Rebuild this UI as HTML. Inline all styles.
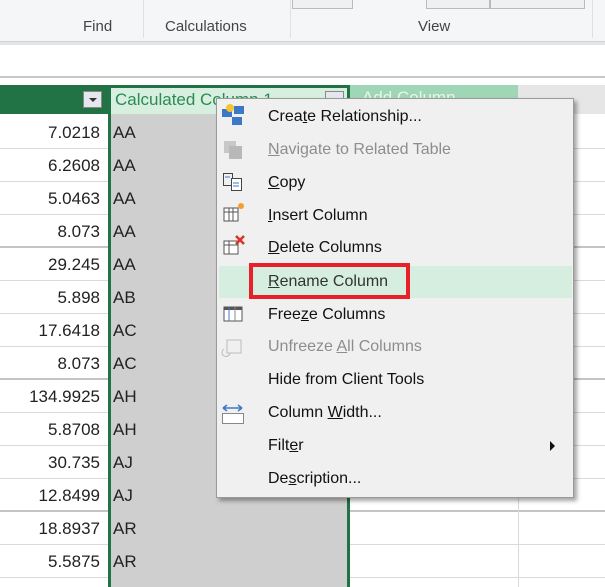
<!DOCTYPE html>
<html><head><style>
*{margin:0;padding:0;box-sizing:border-box}
body{width:605px;height:587px;overflow:hidden;background:#fff;font-family:"Liberation Sans",Arial,sans-serif;position:relative}
.a{position:absolute}
.rib{left:0;top:0;width:605px;height:42px;background:#f5f6f7;border-bottom:1px solid #d4d4d4}
.rl{font-size:15px;color:#444;top:18px}
.sep{width:1px;background:#e0e0e0;top:0;height:38px}
.row{left:0;width:605px;height:33px;border-bottom:1px solid #dadada}
.num{left:0;width:100px;text-align:right;font-size:17px;color:#222;line-height:33px}
.aa{left:113px;font-size:17px;color:#222;line-height:33px}
.menu{left:216px;top:98px;width:358px;height:400px;background:#f0f0f0;border:1px solid #9a9a9a;box-shadow:3px 3px 4px rgba(0,0,0,.35)}
.it{left:268px;font-size:16px;color:#111;line-height:20px}
.dis{color:#8d8d8d}
u{text-decoration:underline}
</style></head><body>
<div class="a rib"></div>
<div class="a" style="left:0;top:42px;width:605px;height:3px;background:#e4e4e4"></div>
<div class="a sep" style="left:143px"></div>
<div class="a sep" style="left:290px"></div>
<div class="a sep" style="left:592px"></div>
<div class="a rl" style="left:83px">Find</div>
<div class="a rl" style="left:165px">Calculations</div>
<div class="a rl" style="left:418px">View</div>
<div class="a" style="left:292px;top:0;width:61px;height:9px;border:1px solid #bbb;border-top:none;background:#f0f0f0"></div>
<div class="a" style="left:426px;top:0;width:64px;height:9px;border:1px solid #bbb;border-top:none;background:#f0f0f0"></div>
<div class="a" style="left:490px;top:0;width:95px;height:9px;border:1px solid #bbb;border-top:none;background:#f0f0f0"></div>
<div class="a" style="left:0;top:76px;width:605px;height:2px;background:#c8c8c8"></div>

<!-- header -->
<div class="a" style="left:0;top:85px;width:108px;height:29px;background:#217346"></div>
<div class="a" style="left:83px;top:91px;width:19px;height:17px;background:#e6e6ee;border:1px solid #888"><div class="a" style="left:5px;top:6px;border-left:4px solid transparent;border-right:4px solid transparent;border-top:4px solid #333"></div></div>
<div class="a" style="left:518px;top:85px;width:87px;height:29px;background:#e6e6e6"></div>
<div class="a" style="left:350px;top:85px;width:168px;height:29px;background:#9fd6b6"></div>
<div class="a" style="left:362px;top:88px;font-size:17px;color:#e8f5ec">Add Column</div>
<div class="a" style="left:108px;top:85px;width:242px;height:502px;background:#cfcfcf;border-left:3px solid #217346;border-right:3px solid #217346;border-top:3px solid #217346"></div>
<div class="a" style="left:111px;top:88px;width:236px;height:26px;background:#d6efdf"></div>
<div class="a" style="left:115px;top:90px;font-size:17px;color:#2e8a54">Calculated Column 1</div>
<div class="a" style="left:325px;top:91px;width:19px;height:17px;background:#e6e6ee;border:1px solid #888"></div>

<!-- rows -->
<div class="a row" style="top:116px"></div><div class="a row" style="top:149px"></div><div class="a row" style="top:182px"></div><div class="a row" style="top:215px;border-bottom:2px solid #c4c4c4"></div><div class="a row" style="top:248px"></div><div class="a row" style="top:281px"></div><div class="a row" style="top:314px"></div><div class="a row" style="top:347px;border-bottom:2px solid #c4c4c4"></div><div class="a row" style="top:380px"></div><div class="a row" style="top:413px"></div><div class="a row" style="top:446px"></div><div class="a row" style="top:479px;border-bottom:2px solid #c4c4c4"></div><div class="a row" style="top:512px"></div><div class="a row" style="top:545px"></div>
<div class="a" style="left:518px;top:114px;width:1px;height:473px;background:#dadada"></div>
<div class="a" style="left:108px;top:114px;width:242px;height:473px;background:#cfcfcf;border-left:3px solid #217346;border-right:3px solid #217346"></div>
<div class="a num" style="top:116px">7.0218</div><div class="a aa" style="top:116px">AA</div>
<div class="a num" style="top:149px">6.2608</div><div class="a aa" style="top:149px">AA</div>
<div class="a num" style="top:182px">5.0463</div><div class="a aa" style="top:182px">AA</div>
<div class="a num" style="top:215px">8.073</div><div class="a aa" style="top:215px">AA</div>
<div class="a num" style="top:248px">29.245</div><div class="a aa" style="top:248px">AA</div>
<div class="a num" style="top:281px">5.898</div><div class="a aa" style="top:281px">AB</div>
<div class="a num" style="top:314px">17.6418</div><div class="a aa" style="top:314px">AC</div>
<div class="a num" style="top:347px">8.073</div><div class="a aa" style="top:347px">AC</div>
<div class="a num" style="top:380px">134.9925</div><div class="a aa" style="top:380px">AH</div>
<div class="a num" style="top:413px">5.8708</div><div class="a aa" style="top:413px">AH</div>
<div class="a num" style="top:446px">30.735</div><div class="a aa" style="top:446px">AJ</div>
<div class="a num" style="top:479px">12.8499</div><div class="a aa" style="top:479px">AJ</div>
<div class="a num" style="top:512px">18.8937</div><div class="a aa" style="top:512px">AR</div>
<div class="a num" style="top:545px">5.5875</div><div class="a aa" style="top:545px">AR</div>

<!-- menu -->
<div class="a menu"></div>
<div class="a" style="left:219px;top:266px;width:353px;height:32px;background:#d5eedf"></div>
<div class="a" style="left:249px;top:263px;width:161px;height:36px;border:4px solid #e8202a"></div>

<svg class="a" style="left:221px;top:103px" width="28" height="380">
<g>
<rect x="1" y="6" width="10" height="8" fill="#3d78c8"/><rect x="13" y="3" width="10" height="8" fill="#3d78c8"/><rect x="11" y="14" width="10" height="8" fill="#3d78c8"/><circle cx="9" cy="5" r="4" fill="#f4c430"/>
</g>
<g fill="#c8c8c8"><rect x="3" y="38" width="12" height="12"/><rect x="8" y="43" width="13" height="13" fill="#b8b8b8"/></g>
<g fill="none" stroke="#444"><rect x="2.5" y="70.5" width="9" height="12"/><rect x="10.5" y="75.5" width="10" height="12" fill="#fff"/></g><g stroke="#3d78c8"><line x1="4" y1="74" x2="9" y2="74"/><line x1="12" y1="80" x2="18" y2="80"/><line x1="12" y1="83" x2="18" y2="83"/></g>
<g><rect x="3" y="105" width="14" height="13" fill="#fff" stroke="#555"/><line x1="3" y1="109" x2="17" y2="109" stroke="#555"/><line x1="8" y1="105" x2="8" y2="118" stroke="#555"/><line x1="12" y1="105" x2="12" y2="118" stroke="#555"/><circle cx="20" cy="103" r="3" fill="#f4a030"/></g>
<g><rect x="3" y="138" width="14" height="13" fill="#fff" stroke="#555"/><line x1="3" y1="142" x2="17" y2="142" stroke="#555"/><line x1="8" y1="138" x2="8" y2="151" stroke="#555"/><path d="M15 133 L23 141 M23 133 L15 141" stroke="#e03020" stroke-width="2.5"/></g>
<g><rect x="3" y="204" width="18" height="14" fill="#fff" stroke="#555"/><rect x="3" y="204" width="18" height="3" fill="#555"/><line x1="8" y1="204" x2="8" y2="218" stroke="#3d78c8"/><line x1="14" y1="204" x2="14" y2="218" stroke="#888"/></g>
<g stroke="#bbb" fill="none"><rect x="6" y="237" width="14" height="13"/><path d="M3 246 a4 4 0 1 0 6 4"/></g>
<g><path d="M2 305 H21 M2 305 l4 -3 M2 305 l4 3 M21 305 l-4 -3 M21 305 l-4 3" stroke="#3d78c8" stroke-width="1.5" fill="none"/><rect x="1.5" y="310.5" width="21" height="10" fill="#fff" stroke="#888"/></g>
</svg>

<div class="a it" style="top:107px">Crea<u>t</u>e Relationship...</div>
<div class="a it dis" style="top:140px"><u>N</u>avigate to Related Table</div>
<div class="a it" style="top:173px"><u>C</u>opy</div>
<div class="a it" style="top:206px"><u>I</u>nsert Column</div>
<div class="a it" style="top:238px"><u>D</u>elete Columns</div>
<div class="a it" style="top:272px;color:#333"><u>R</u>ename Column</div>
<div class="a it" style="top:305px">Free<u>z</u>e Columns</div>
<div class="a it dis" style="top:337px">Unfreeze <u>A</u>ll Columns</div>
<div class="a it" style="top:370px">Hide from Client Tools</div>
<div class="a it" style="top:403px">Column <u>W</u>idth...</div>
<div class="a it" style="top:436px">Filt<u>e</u>r</div>
<div class="a" style="left:550px;top:441px;border-top:5px solid transparent;border-bottom:5px solid transparent;border-left:5px solid #111"></div>
<div class="a it" style="top:469px">De<u>s</u>cription...</div>
</body></html>
